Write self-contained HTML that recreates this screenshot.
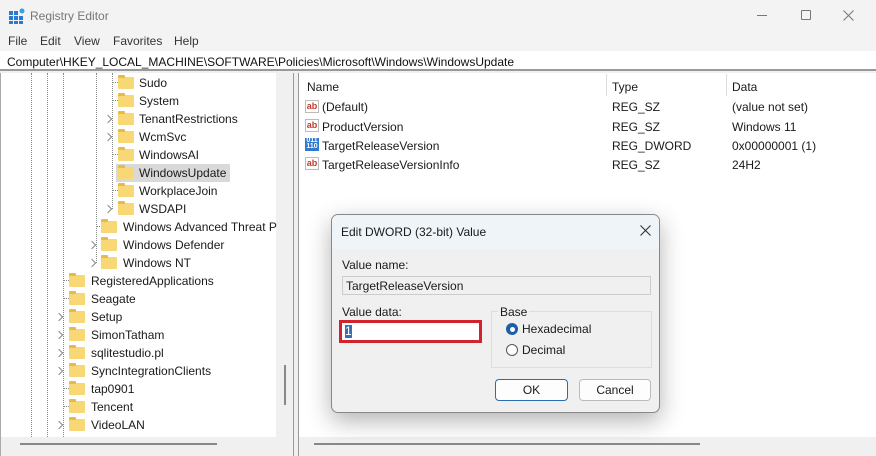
<!DOCTYPE html>
<html><head><style>
*{margin:0;padding:0;box-sizing:border-box}
body{width:876px;height:456px;overflow:hidden;background:#f0f0f0;font-family:"Liberation Sans",sans-serif;font-size:12px;color:#1a1a1a;position:relative}
.a{position:absolute;white-space:nowrap}
.t .a{margin-top:1px}
.f{position:absolute;width:16px;height:12px;background:#f8d775;border-radius:1px}
.f:before{content:"";position:absolute;left:0;top:-2px;width:7px;height:3px;background:#e9b949;border-radius:1px 1px 0 0}
.ch{position:absolute;width:6px;height:6px;border-right:1.2px solid #888;border-top:1.2px solid #888;transform:rotate(45deg)}
.dv{position:absolute;width:0;border-left:1px dotted #888}
.dh{position:absolute;height:0;width:8px;border-top:1px dotted #888}
.ab{position:absolute;width:14px;height:13px;border:1px solid #bbb;background:#fff;font-size:9px;color:#c0392b;font-weight:bold;line-height:10px;text-align:center}
</style></head><body>
<div class="a" style="left:0;top:0;width:876px;height:31px;background:#f3f3f3"></div>
<svg class="a" style="left:9px;top:8px" width="16" height="16"><rect x="0" y="3" width="4" height="4" fill="#2a7ad1"/><rect x="5" y="3" width="4" height="4" fill="#2a7ad1"/><rect x="0" y="8" width="4" height="4" fill="#2a7ad1"/><rect x="5" y="8" width="4" height="4" fill="#2a7ad1"/><rect x="10" y="8" width="4" height="4" fill="#2a7ad1"/><rect x="0" y="13" width="4" height="3" fill="#2a7ad1"/><rect x="5" y="13" width="4" height="3" fill="#2a7ad1"/><rect x="10" y="13" width="4" height="3" fill="#2a7ad1"/><circle cx="13" cy="3" r="2.5" fill="#3aa0e0"/></svg>
<div class="a" style="left:30px;top:9px;font-size:12px;color:#777">Registry Editor</div>
<div class="a" style="left:757px;top:15px;width:10px;border-top:1px solid #777"></div>
<div class="a" style="left:801px;top:10px;width:10px;height:10px;border:1px solid #777;border-radius:1px"></div>
<svg class="a" style="left:843px;top:10px" width="11" height="11"><path d="M0.5 0.5L10.5 10.5M10.5 0.5L0.5 10.5" stroke="#777" stroke-width="1"/></svg>
<div class="a" style="left:0;top:31px;width:876px;height:20px;background:#f3f3f3"></div>
<div class="a" style="left:8px;top:34px;color:#333">File</div>
<div class="a" style="left:40px;top:34px;color:#333">Edit</div>
<div class="a" style="left:74px;top:34px;color:#333">View</div>
<div class="a" style="left:113px;top:34px;color:#333">Favorites</div>
<div class="a" style="left:174px;top:34px;color:#333">Help</div>
<div class="a" style="left:0;top:51px;width:876px;height:20px;background:#fff;border-bottom:2px solid #999"></div>
<div class="a" style="left:7px;top:55px;color:#111">Computer\HKEY_LOCAL_MACHINE\SOFTWARE\Policies\Microsoft\Windows\WindowsUpdate</div>
<div class="a" style="left:0;top:73px;width:294px;height:383px;background:#f0f0f0;border-right:1px solid #999;border-left:1px solid #aaa"></div>
<div class="a" style="left:1px;top:73px;width:275px;height:364px;background:#fff"></div>
<div class="a" style="left:284px;top:365px;width:2px;height:40px;background:#888"></div>
<div class="a" style="left:20px;top:443px;width:197px;height:2px;background:#888"></div>
<div class="dv" style="left:31px;top:73px;height:364px"></div>
<div class="dv" style="left:47px;top:73px;height:364px"></div>
<div class="dv" style="left:63px;top:73px;height:364px"></div>
<div class="dv" style="left:96px;top:73px;height:190px"></div>
<div class="dv" style="left:112px;top:73px;height:136px"></div>
<div class="t">
<div class="dh" style="left:112px;top:82px"></div><div class="f" style="left:118px;top:77px"></div><div class="a" style="left:139px;top:75px">Sudo</div>
<div class="dh" style="left:112px;top:100px"></div><div class="f" style="left:118px;top:95px"></div><div class="a" style="left:139px;top:93px">System</div>
<div class="ch" style="left:105px;top:116px"></div><div class="f" style="left:118px;top:113px"></div><div class="a" style="left:139px;top:111px">TenantRestrictions</div>
<div class="ch" style="left:105px;top:134px"></div><div class="f" style="left:118px;top:131px"></div><div class="a" style="left:139px;top:129px">WcmSvc</div>
<div class="dh" style="left:112px;top:154px"></div><div class="f" style="left:118px;top:149px"></div><div class="a" style="left:139px;top:147px">WindowsAI</div>
<div class="a" style="left:116px;top:164px;width:114px;height:18px;background:#d9d9d9;margin-top:0"></div>
<div class="f" style="left:118px;top:167px"></div><div class="a" style="left:139px;top:165px">WindowsUpdate</div>
<div class="dh" style="left:112px;top:190px"></div><div class="f" style="left:118px;top:185px"></div><div class="a" style="left:139px;top:183px">WorkplaceJoin</div>
<div class="ch" style="left:105px;top:206px"></div><div class="f" style="left:118px;top:203px"></div><div class="a" style="left:139px;top:201px">WSDAPI</div>
<div class="dh" style="left:96px;top:226px"></div><div class="f" style="left:101px;top:221px"></div><div class="a" style="left:123px;top:219px">Windows Advanced Threat P</div>
<div class="ch" style="left:89px;top:242px"></div><div class="f" style="left:101px;top:239px"></div><div class="a" style="left:123px;top:237px">Windows Defender</div>
<div class="ch" style="left:89px;top:260px"></div><div class="f" style="left:101px;top:257px"></div><div class="a" style="left:123px;top:255px">Windows NT</div>
<div class="dh" style="left:63px;top:280px"></div><div class="f" style="left:69px;top:275px"></div><div class="a" style="left:91px;top:273px">RegisteredApplications</div>
<div class="dh" style="left:63px;top:298px"></div><div class="f" style="left:69px;top:293px"></div><div class="a" style="left:91px;top:291px">Seagate</div>
<div class="ch" style="left:56px;top:314px"></div><div class="f" style="left:69px;top:311px"></div><div class="a" style="left:91px;top:309px">Setup</div>
<div class="ch" style="left:56px;top:332px"></div><div class="f" style="left:69px;top:329px"></div><div class="a" style="left:91px;top:327px">SimonTatham</div>
<div class="ch" style="left:56px;top:350px"></div><div class="f" style="left:69px;top:347px"></div><div class="a" style="left:91px;top:345px">sqlitestudio.pl</div>
<div class="ch" style="left:56px;top:368px"></div><div class="f" style="left:69px;top:365px"></div><div class="a" style="left:91px;top:363px">SyncIntegrationClients</div>
<div class="dh" style="left:63px;top:388px"></div><div class="f" style="left:69px;top:383px"></div><div class="a" style="left:91px;top:381px">tap0901</div>
<div class="dh" style="left:63px;top:406px"></div><div class="f" style="left:69px;top:401px"></div><div class="a" style="left:91px;top:399px">Tencent</div>
<div class="ch" style="left:56px;top:422px"></div><div class="f" style="left:69px;top:419px"></div><div class="a" style="left:91px;top:417px">VideoLAN</div>
</div>
<div class="a" style="left:298px;top:73px;width:578px;height:383px;background:#fff;border-left:1px solid #999"></div>
<div class="a" style="left:299px;top:437px;width:577px;height:19px;background:#f0f0f0"></div>
<div class="a" style="left:314px;top:443px;width:386px;height:2px;background:#888"></div>
<div class="a" style="left:606px;top:74px;width:1px;height:22px;background:#ddd"></div>
<div class="a" style="left:726px;top:74px;width:1px;height:22px;background:#ddd"></div>
<div class="a" style="left:307px;top:80px">Name</div>
<div class="a" style="left:612px;top:80px">Type</div>
<div class="a" style="left:732px;top:80px">Data</div>
<div class="ab" style="left:305px;top:100px">ab</div><div class="a" style="left:322px;top:100px">(Default)</div><div class="a" style="left:612px;top:100px">REG_SZ</div><div class="a" style="left:732px;top:100px">(value not set)</div>
<div class="ab" style="left:305px;top:119px">ab</div><div class="a" style="left:322px;top:120px">ProductVersion</div><div class="a" style="left:612px;top:120px">REG_SZ</div><div class="a" style="left:732px;top:120px">Windows 11</div>
<div class="a" style="left:305px;top:138px;width:14px;height:13px;background:#2f7ad0;color:#fff;font-size:7px;line-height:6px;text-align:center;font-weight:bold">011<br>110</div><div class="a" style="left:322px;top:139px">TargetReleaseVersion</div><div class="a" style="left:612px;top:139px">REG_DWORD</div><div class="a" style="left:732px;top:139px">0x00000001 (1)</div>
<div class="ab" style="left:305px;top:157px">ab</div><div class="a" style="left:322px;top:158px">TargetReleaseVersionInfo</div><div class="a" style="left:612px;top:158px">REG_SZ</div><div class="a" style="left:732px;top:158px">24H2</div>
<div class="a" style="left:331px;top:214px;width:329px;height:199px;background:#f0f0f0;border:1px solid #888;border-radius:7px;box-shadow:0 8px 24px rgba(0,0,0,.3);overflow:hidden">
 <div class="a" style="left:0;top:0;width:329px;height:34px;background:#eef4f8"></div>
 <div class="a" style="left:9px;top:10px">Edit DWORD (32-bit) Value</div>
 <svg class="a" style="left:308px;top:10px" width="11" height="11"><path d="M0.5 0.5L10.5 10.5M10.5 0.5L0.5 10.5" stroke="#333" stroke-width="1.1"/></svg>
 <div class="a" style="left:10px;top:43px">Value name:</div>
 <div class="a" style="left:10px;top:61px;width:309px;height:19px;background:#f0f0f0;border:1px solid #ccc;padding:2px 3px">TargetReleaseVersion</div>
 <div class="a" style="left:10px;top:90px">Value data:</div>
 <div class="a" style="left:7px;top:105px;width:143px;height:23px;border:3px solid #d0232e;background:#fff"><span style="position:absolute;left:3px;top:2px;background:#3470b8;color:#fff;line-height:13px">1</span></div>
 <div class="a" style="left:159px;top:96px;width:161px;height:57px;border:1px solid #ddd"></div>
 <div class="a" style="left:166px;top:90px;background:#f0f0f0;padding:0 2px">Base</div>
 <div class="a" style="left:174px;top:108px;width:12px;height:12px;border-radius:50%;background:#1c5fa8"><div style="margin:3.5px;width:5px;height:5px;border-radius:50%;background:#fff"></div></div>
 <div class="a" style="left:190px;top:107px">Hexadecimal</div>
 <div class="a" style="left:174px;top:129px;width:12px;height:12px;border-radius:50%;border:1px solid #555;background:#fff"></div>
 <div class="a" style="left:190px;top:128px">Decimal</div>
 <div class="a" style="left:163px;top:164px;width:73px;height:22px;border:1px solid #2b6cb0;border-radius:4px;background:#fdfdfd;text-align:center;line-height:20px">OK</div>
 <div class="a" style="left:247px;top:164px;width:72px;height:22px;border:1px solid #bbb;border-radius:4px;background:#fdfdfd;text-align:center;line-height:20px">Cancel</div>
</div>
</body></html>
